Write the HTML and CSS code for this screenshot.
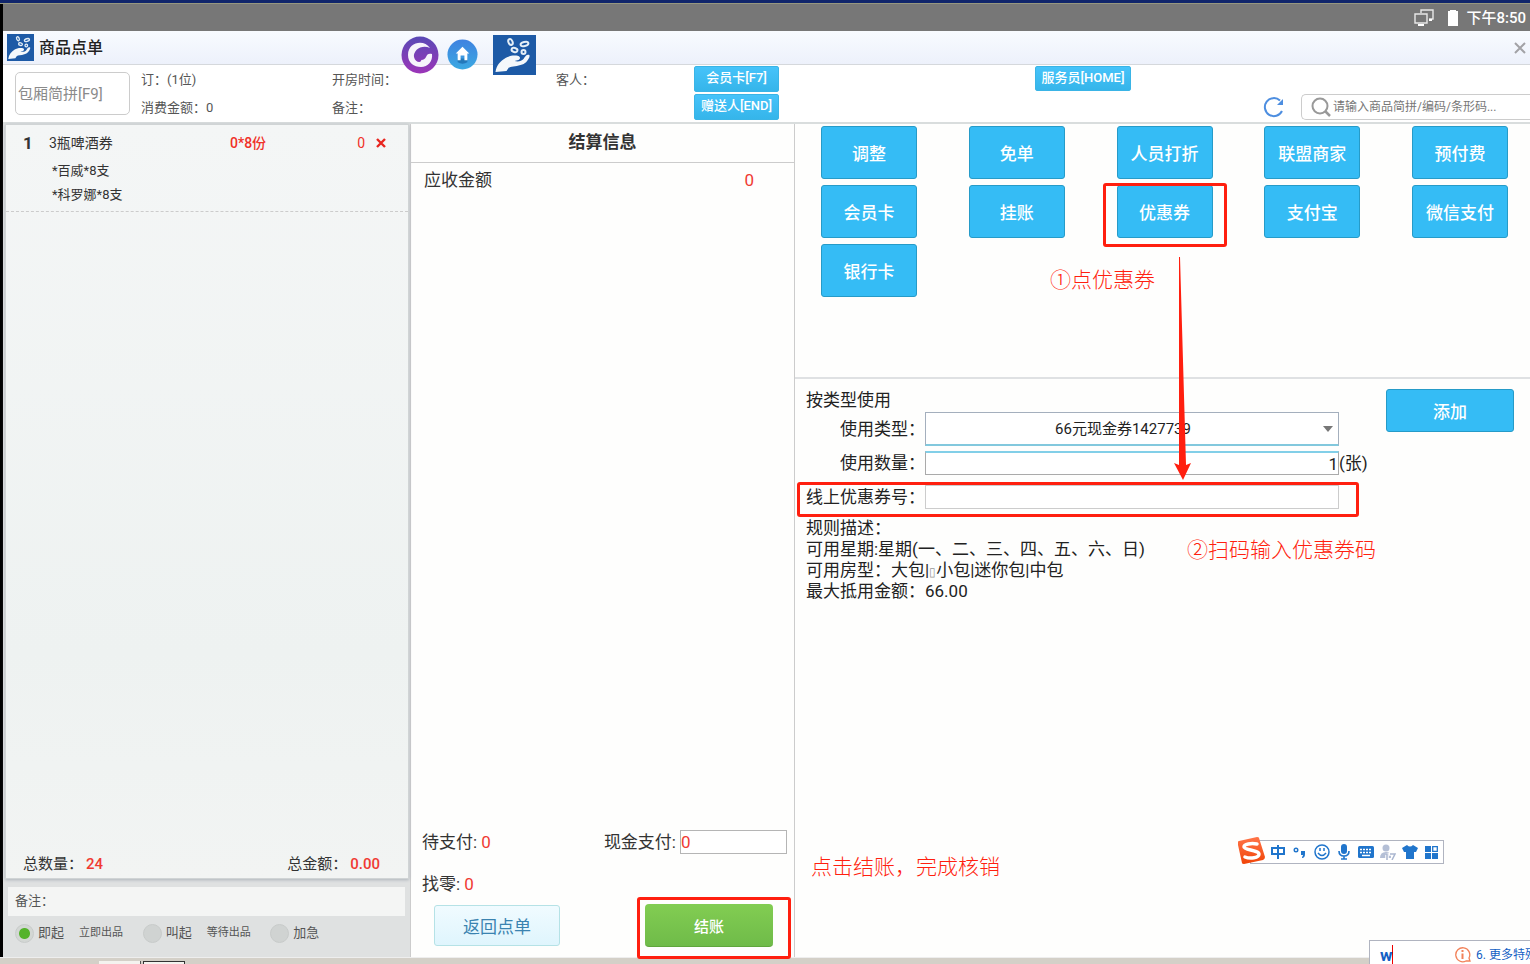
FILE: index.html
```html
<!DOCTYPE html>
<html lang="zh-CN">
<head>
<meta charset="utf-8">
<title>商品点单</title>
<link rel="stylesheet" href="styles.css">
</head>
<body>
<svg class="defs" aria-hidden="true">
  <symbol id="hand" viewBox="0 0 42 40">
    <path fill="#f4f8fb" d="M2 37C3 30 7 26 12 23c3-2 8-3 13-2 2 1 2 3 0 4l-4 1c4 1 7 0 9-2 2-3 3-5 6-4v2c-2 4-4 7-9 8-5 2-10 1-12 3l-2 3z"/>
    <g fill="none" stroke="#e4eef6" stroke-width="2">
      <ellipse cx="17" cy="7" rx="2" ry="3" transform="rotate(-25 17 7)"/>
      <ellipse cx="31" cy="9" rx="4" ry="2" transform="rotate(-15 31 9)"/>
      <ellipse cx="21" cy="15" rx="3" ry="2" transform="rotate(15 21 15)"/>
      <ellipse cx="30" cy="17" rx="2" ry="2"/>
    </g>
  </symbol>
</svg>

<div class="screen">
  <div class="host-bar"></div>
  <div class="app">
    <div class="status-bar">
      <svg class="ic-screens" viewBox="0 0 20 18" fill="none" stroke="#e8e8e8" stroke-width="1.4"><path d="M7 4V1h12v9h-4M1 5h12v9H1z"/><path d="M4 16h6M15 11h3" stroke="#fff" stroke-width="2"/></svg>
      <svg class="ic-battery" viewBox="0 0 12 16"><path fill="#fff" d="M3 0h6v1h2v15H1V1h2z"/></svg>
      <span>下午8:50</span>
    </div>

    <header class="title-bar">
      <svg class="logo" viewBox="0 0 42 40" preserveAspectRatio="none"><use href="#hand"/></svg>
      <h1>商品点单</h1>
      <button class="close" aria-label="关闭"><svg viewBox="0 0 12 12"><path d="M1 1l10 10M11 1L1 11" stroke="#a2a2a6" stroke-width="2"/></svg></button>
    </header>

    <section class="info-bar">
      <input class="room" type="text" placeholder="包厢简拼[F9]" aria-label="包厢简拼">
      <div class="info order"><span>订：(1位)</span><span>消费金额：0</span></div>
      <div class="info opened"><span>开房时间：</span><span>备注：</span></div>
      <div class="info guest"><span>客人：</span></div>
      <div class="tags"><button class="tag">会员卡[F7]</button><button class="tag">赠送人[END]</button></div>
      <div class="tools">
        <button class="tag waiter">服务员[HOME]</button>
        <div class="search-row">
          <button class="refresh" aria-label="刷新"><svg viewBox="0 0 22 22"><path d="M17 4.500A9 9 0 1 0 19 15" fill="none" stroke="#4d8ee0" stroke-width="2"/><path d="M20 3v6h-6z" fill="#4d8ee0"/></svg></button>
          <label class="search">
            <svg viewBox="0 0 20 20" fill="none" stroke="#999" stroke-width="2"><circle cx="9" cy="9" r="7.5"/><path d="M14 14l5 5" stroke-width="2.5"/></svg>
            <input type="text" placeholder="请输入商品简拼/编码/条形码..." aria-label="搜索商品">
          </label>
        </div>
      </div>
    </section>

    <main class="main">
      <aside class="cart">
        <div class="cart-list">
          <div class="item">
            <div class="item-row"><b>1</b><span class="name">3瓶啤酒券</span><span class="qty">0*8份</span><span class="sum">0</span><button class="del" aria-label="删除"><svg viewBox="0 0 10 10"><path d="M1 1l8 8M9 1L1 9" stroke="#e8251f" stroke-width="2.4"/></svg></button></div>
            <div class="sub">*百威*8支</div>
            <div class="sub">*科罗娜*8支</div>
          </div>
          <div class="totals"><span>总数量：<em>24</em></span><span>总金额：<em>0.00</em></span></div>
        </div>
        <div class="cart-foot">
          <label class="remark">备注：<input type="text"></label>
          <div class="radios">
            <label class="opt"><input type="radio" name="serve" checked>即起<small>立即出品</small></label>
            <label class="opt"><input type="radio" name="serve">叫起<small>等待出品</small></label>
            <label class="opt"><input type="radio" name="serve">加急</label>
          </div>
        </div>
      </aside>

      <section class="settle">
        <h2>结算信息</h2>
        <div class="due"><span>应收金额</span><em>0</em></div>
        <div class="settle-foot">
          <div class="pay-line"><span>待支付: <em>0</em></span><label>现金支付: <input type="text" value="0"></label></div>
          <div class="change">找零: <em>0</em></div>
          <div class="actions">
            <button class="back">返回点单</button>
            <div class="marked"><button class="checkout">结账</button><i class="mark mark-checkout"></i></div>
          </div>
        </div>
      </section>

      <section class="pay">
        <div class="methods">
          <button class="blue">调整</button>
          <button class="blue">免单</button>
          <button class="blue">人员打折</button>
          <button class="blue">联盟商家</button>
          <button class="blue">预付费</button>
          <button class="blue">会员卡</button>
          <button class="blue">挂账</button>
          <div class="marked"><button class="blue">优惠券</button><i class="mark mark-coupon"></i></div>
          <button class="blue">支付宝</button>
          <button class="blue">微信支付</button>
          <button class="blue">银行卡</button>
        </div>
        <form class="coupon">
          <div class="fields">
            <h3>按类型使用</h3>
            <div class="row type"><label for="type">使用类型：</label>
              <div class="select"><select id="type"><option>66元现金券1427739</option></select><svg viewBox="0 0 10 6"><path d="M0 0h10L5 6z" fill="#777"/></svg></div><span></span></div>
            <div class="row count"><label for="count">使用数量：</label><input id="count" type="text" value="1"><span>(张)</span></div>
            <div class="row code"><label for="code">线上优惠券号：</label><input id="code" type="text"><i class="mark mark-code"></i></div>
            <div class="rules">
              <p>规则描述：</p>
              <p>可用星期:星期(一、二、三、四、五、六、日)</p>
              <p>可用房型：大包|<span class="box">▯</span>小包|迷你包|中包</p>
              <p>最大抵用金额：66.00</p>
            </div>
          </div>
          <button type="button" class="blue add">添加</button>
        </form>
      </section>
    </main>
  </div>
  <footer class="taskbar"><i class="task"></i><i class="task pressed"></i></footer>

  <div class="dock">
    <svg class="swirl" viewBox="0 0 40 40"><defs><linearGradient id="pg" x2="0" y2="1"><stop stop-color="#5949b5"/><stop offset="1" stop-color="#9c35b8"/></linearGradient></defs><circle cx="20" cy="20" r="18.5" fill="url(#pg)"/><path fill="#f6f3fb" d="M30 13C24 4 8 7 8 20c0 8 6 12 13 12 7 0 12-6 11-13-3-1-5 0-6 3-2 4-5 2-5 4-1 2-6 1-7-4-1-7 8-13 16-9z"/></svg>
    <svg class="home" viewBox="0 0 32 32"><defs><linearGradient id="hg" x2="0" y2="1"><stop stop-color="#3f82e0"/><stop offset="1" stop-color="#3ba9e2"/></linearGradient></defs><circle cx="16" cy="16" r="15.500" fill="url(#hg)"/><path fill="#2379ba" d="M11 20h10v4q-5 3-10 0z"/><path fill="#fff" d="M16 8l7 7h-2v7h-3v-5h-4v5h-3v-7H9z"/></svg>
    <svg class="coins" viewBox="0 0 42 40"><use href="#hand"/></svg>
  </div>

  <svg class="arrow" viewBox="0 0 18 224" aria-hidden="true"><path fill="#ff1f0f" d="M5 0h1l6 208 5-2-8 17L0 206l5 2z"/></svg>
  <p class="note note-one">①点优惠券</p>
  <p class="note note-two">②扫码输入优惠券码</p>
  <p class="note note-three">点击结账，完成核销</p>

  <div class="ime">
    <svg class="sogou" viewBox="0 0 28 28"><defs><linearGradient id="og" x2="0" y2="1"><stop stop-color="#ff7448"/><stop offset="1" stop-color="#f14407"/></linearGradient></defs><path fill="url(#og)" d="M1 5q0-1 1-1L20 0q2 0 2 1l6 19q0 2-2 3L7 27q-2 0-2-1L1 8z"/><path fill="none" stroke="#fff" stroke-width="3.500" stroke-linecap="round" d="M20 7C14 6 7 7 7 10s15 3 15 7-9 5-14 3"/></svg>
    <svg viewBox="0 0 16 16" fill="none" stroke="#2075cc" stroke-width="2"><path d="M2 4h12v6H2zM8 1v14"/></svg>
    <svg viewBox="0 0 16 16"><circle cx="4" cy="6" r="1.800" fill="none" stroke="#2075cc" stroke-width="1.400"/><path fill="#2075cc" d="M9 7h4v3q0 4-3 4v-1q1-1 1-2H9z"/></svg>
    <svg viewBox="0 0 16 16" fill="none" stroke="#2075cc" stroke-width="1.500"><circle cx="8" cy="8" r="7"/><path d="M4 9q4 5 8 0M6 4v3M10 4v3"/></svg>
    <svg viewBox="0 0 16 16"><rect x="5" y="0" width="6" height="10" rx="3" fill="#2075cc"/><path fill="none" stroke="#2075cc" stroke-width="1.600" d="M3 7q0 5 5 5t5-5M8 12v3M5 15h6"/></svg>
    <svg viewBox="0 0 16 16"><rect y="2" width="16" height="12" rx="1.500" fill="#2075cc"/><path stroke="#fff" stroke-width="1.500" d="M2 5.500h12M2 8.500h12" stroke-dasharray="2 1"/><path stroke="#fff" stroke-width="1.500" d="M4 11.500h8"/></svg>
    <svg viewBox="0 0 16 16"><circle cx="6" cy="4" r="3.500" fill="#b4bfd6"/><path fill="#b4bfd6" d="M0 14q0-6 6-6 4 0 5 3v3z"/><path fill="none" stroke="#fff" stroke-width="3.500" d="M7 9v7M9 10h5l-2 6"/><path fill="none" stroke="#aab6d0" stroke-width="1.500" d="M5 10h2v6M10 10h5l-3 6"/></svg>
    <svg viewBox="0 0 16 16"><path fill="#2075cc" d="M5 1q3 3 6 0l5 3-2 4h-2v7H4V8H2L0 4z"/></svg>
    <svg viewBox="0 0 16 16" fill="#2075cc"><path d="M1 2h6v6H1zM1 9h6v6H1zM8 9h6v6H8z"/><path fill="none" stroke="#2075cc" stroke-width="1.300" d="M8.700 2.700h4.600v4.600H8.700z"/></svg>
  </div>

  <div class="candidates"><b>w</b>
    <span class="hint"><svg viewBox="0 0 16 16" fill="none" stroke="#f2825a" stroke-width="1.300"><path d="M14 11a7 7 0 1 0-3 3h4z"/><path stroke-width="2" d="M7.500 3v2M7.500 6.500V12"/></svg>6. 更多特殊</span>
  </div>
</div>
</body>
</html>
```
FILE: styles.css
```css
* { box-sizing: border-box; }
body, h1, h2, h3, p { margin: 0; }
body, button, input, select {
  font-family: Roboto, "Noto Sans CJK SC", sans-serif;
}
body { font-size: 17px; line-height: 20px; color: #333; background: #fff; }
button { border: 0; padding: 0; background: none; }
input, select { border: 0; padding: 0; margin: 0; min-width: 0; color: inherit; background: #fff; outline: 0; border-radius: 0; }
em, i { font-style: normal; }
em { color: #f03a32; }
svg { display: block; flex: none; }
.defs { position: absolute; width: 0; height: 0; }

.screen { position: relative; display: flex; flex-direction: column; min-height: 100vh; overflow: hidden; }
.host-bar { height: 4px; background: #10256b; border-bottom: 1px solid #96977f; }
.app { flex: 1; display: flex; flex-direction: column; border-left: 3px solid #000; background: #fefefd; }

.status-bar { height: 27px; display: flex; align-items: center; justify-content: flex-end; padding-right: 4px; background: #777; color: #fff; font-size: 15px; font-weight: 500; }
.ic-screens { width: 20px; height: 18px; margin-right: 13px; }
.ic-battery { width: 12px; height: 16px; margin-right: 7px; }

.title-bar { height: 34px; display: flex; align-items: center; padding: 0 4px; background: linear-gradient(#f8fbff, #edf1fb); border-bottom: 1px solid #d5d8dc; }
.title-bar h1 { font-size: 16px; font-weight: 500; color: #222; margin-left: 5px; flex: 1; }
.logo { width: 27px; height: 27px; background: #1d5aa6; }
.close svg { width: 12px; height: 12px; }

.info-bar { height: 59px; display: flex; padding: 1px 0 0 12px; border-bottom: 2px solid #d9dddd; font-size: 13px; color: #555; background: #fff; }
.room { width: 115px; height: 43px; margin: 6px 11px 0 0; padding: 0 2px; border: 1px solid #ccc; border-radius: 5px; font-size: 15px; }
.room::placeholder { color: #8a8a8a; }
.info { display: flex; flex-direction: column; gap: 8px; padding-top: 4px; }
.order { width: 191px; }
.opened { width: 224px; }
.guest { width: 138px; }
.tags { display: flex; flex-direction: column; gap: 2px; width: 85px; }
.tag { height: 25px; background: linear-gradient(#46c3fa, #35b5ea); border: 1px solid #3ab4e6; border-radius: 2px; color: #fff; font-size: 13px; line-height: 20px; padding-bottom: 2px; font-weight: 500; }
.tags .tag { height: 26px; }
.tools { flex: 1; display: flex; flex-direction: column; align-items: flex-start; gap: 3px; padding-left: 256px; }
.waiter { width: 96px; }
.search-row { align-self: flex-end; display: flex; align-items: center; gap: 16px; }
.refresh svg { width: 22px; height: 22px; }
.search { display: flex; align-items: center; width: 229px; height: 26px; padding-left: 9px; gap: 2px; border: 1px solid #ccc; border-right: 0; border-radius: 5px 0 0 5px; }
.search svg { width: 20px; height: 20px; }
.search input { flex: 1; font-size: 12px; background: none; }
.search input::placeholder { color: #777; }

.main { flex: 1; display: grid; grid-template-columns: 408px 384px 1fr; }

.cart { display: flex; flex-direction: column; background: #dfe1e1; border-right: 1px solid #ccc; }
.cart-list { flex: 1; display: flex; flex-direction: column; justify-content: space-between; margin: 0 1px 0 2px; background: linear-gradient(#f4f6f6, #eef2f1 70%, #f2f4f3); border: 1px solid #d0d4d5; box-shadow: 0 1px 3px #aeb4bb; }
.item { padding: 8px 0 4px; border-bottom: 1px dashed #ccc; font-size: 13px; }
.item-row { display: flex; align-items: center; padding: 0 22px 0 17px; margin-bottom: 6px; font-size: 14px; color: #f03028; }
.item-row b { width: 26px; color: #333; font-size: 17px; }
.name { width: 181px; color: #333; }
.qty { flex: 1; font-weight: 500; }
.del { margin-left: 11px; }
.del svg { width: 10px; height: 10px; }
.sub { padding-left: 46px; line-height: 24px; }
.totals { display: flex; justify-content: space-between; padding: 0 28px 4px 17px; font-size: 15px; }
.totals em { margin-left: 3px; font-size: 15px; font-weight: 500; }
.cart-foot { padding: 8px 5px 14px; font-size: 13px; color: #555; }
.remark { display: flex; align-items: center; height: 29px; padding: 0 0 2px 7px; background: #f4f5f4; }
.remark input { flex: 1; background: none; }
.radios { display: flex; padding: 7px 7px 0; }
.opt { display: flex; align-items: center; width: 128px; }
.opt input { appearance: none; width: 19px; height: 19px; margin-right: 4px; border-radius: 50%; background: #d0d3d2; border: 1px solid #c8cbca; }
.opt input:checked { background: radial-gradient(circle, #55b32c 5px, #d3d7d4 6px); }
.opt small { margin-left: 15px; font-size: 11px; }

.settle { display: flex; flex-direction: column; border-right: 1px solid #ccc; }
.settle h2 { height: 39px; line-height: 37px; text-align: center; font-size: 17px; font-weight: 700; border-bottom: 1px solid #ccc; }
.due { flex: 1; display: flex; justify-content: space-between; padding: 7px 40px 0 13px; }
.settle-foot { padding: 0 7px 10px 11px; }
.pay-line { display: flex; justify-content: space-between; align-items: center; height: 24px; margin-bottom: 20px; }
.pay-line label { display: flex; align-items: center; gap: 4px; }
.pay-line input { width: 107px; height: 24px; border: 1px solid #b5b5b5; color: #f03a32; font-size: 17px; }
.actions { display: flex; justify-content: space-between; align-items: center; margin-top: 10px; padding: 0 14px 0 12px; }
.back { width: 126px; height: 41px; border: 1px solid #b5e2e6; border-radius: 3px; background: linear-gradient(#f0fbff, #dff5fd); color: #3a83b0; font-size: 17px; }
.checkout { display: block; width: 128px; height: 43px; border-radius: 4px; background: linear-gradient(#82cd52, #6fbb49); border-bottom: 1px solid #5fa63c; color: #fff; font-size: 15px; font-weight: 500; }

.pay { min-width: 0; }
.methods { display: grid; grid-template-columns: repeat(5, 96px); grid-auto-rows: 53px; justify-content: space-between; row-gap: 6px; min-height: 255px; padding: 2px 22px 0 26px; align-content: start; border-bottom: 2px solid #dfe1e3; }
.blue { border: 1px solid #269bc8; border-radius: 3px; background: #35bcf5; color: #fff; font-size: 17px; font-weight: 500; }
.marked { position: relative; display: grid; }
.mark { position: absolute; z-index: 2; border: 3px solid #ff1f0f; border-radius: 3px; pointer-events: none; }
.mark-coupon { inset: -2px -14px -9px; }
.mark-checkout { inset: -7px -18px -12px -8px; }
.mark-code { inset: -3px 27px -8px -9px; }

.coupon { display: flex; align-items: flex-start; padding: 10px 16px 0 11px; color: #222; }
.fields { flex: 1; }
.fields h3 { font-size: 17px; font-weight: 400; line-height: 23px; }
.row { position: relative; display: grid; grid-template-columns: 119px 1fr 47px; align-items: center; height: 24px; }
.row label { text-align: right; }
.row input { height: 24px; border: 1px solid #aaa; font-size: 17px; }
.type { height: 34px; margin-bottom: 5px; }
.select { position: relative; }
.select select { appearance: none; display: block; width: 100%; height: 34px; padding-right: 18px; border: 1px solid #a4afbd; border-bottom: 2px solid #82c8dd; font-size: 15px; text-align: center; text-align-last: center; }
.select svg { position: absolute; right: 6px; top: 14px; width: 10px; height: 6px; }
.count { margin-bottom: 10px; }
.row #count { text-align: right; border-top: 2px solid #82cfe8; }
.row #code { border-color: #ccc; }
.rules { padding-top: 9px; line-height: 21px; }
.box { font-size: 12px; line-height: 1; color: #999; }
.add { width: 128px; height: 43px; }

.taskbar { height: 7px; display: flex; align-items: flex-end; padding-left: 99px; gap: 2px; background: #d4d0c8; border-top: 1px solid #eee; }
.task { width: 42px; height: 3px; background: #f4f3ef; border-right: 1px solid #555; }
.pressed { border: 1px solid #333; border-bottom: 0; }

.dock { position: absolute; left: 400px; top: 34px; display: flex; align-items: center; height: 41px; }
.swirl { width: 40px; height: 40px; margin-right: 7px; }
.home { width: 31px; height: 31px; margin-right: 15px; }
.coins { width: 43px; height: 40px; background: #1d5aa6; }

.arrow { position: absolute; left: 1174px; top: 257px; width: 18px; height: 224px; z-index: 3; }
.note { position: absolute; z-index: 3; font-size: 21px; font-weight: 300; line-height: 24px; color: #ff1f0f; white-space: nowrap; }
.note-one { left: 1050px; top: 268px; }
.note-two { left: 1187px; top: 538px; }
.note-three { left: 811px; top: 855px; }

.ime { position: absolute; left: 1250px; top: 840px; display: flex; align-items: center; gap: 6px; height: 24px; padding: 0 3px 0 19px; border: 1px solid #b0b4c0; background: #fff; }
.ime svg { width: 16px; height: 16px; }
.ime .sogou { position: absolute; left: -14px; top: -4px; width: 28px; height: 28px; }
.candidates { position: absolute; right: 0; bottom: 0; display: flex; justify-content: space-between; width: 161px; height: 24px; padding: 4px 0 0 10px; border: 1px solid #b0b4c0; border-right: 0; border-bottom: 0; background: #fff; color: #1460c4; overflow: hidden; }
.candidates b { height: 20px; border-right: 1px solid #e00; }
.hint { display: flex; align-items: center; width: 75px; font-size: 12px; white-space: nowrap; }
.hint svg { width: 16px; height: 16px; margin-right: 5px; }
```
